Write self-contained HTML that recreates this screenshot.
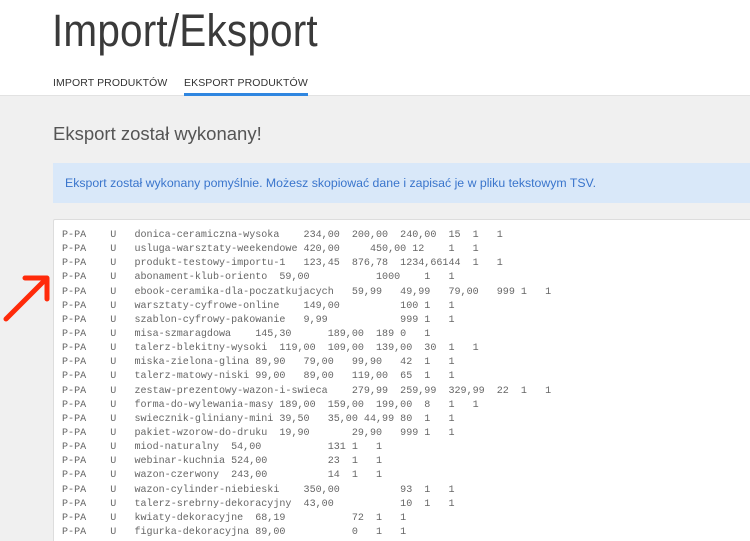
<!DOCTYPE html>
<html><head><meta charset="utf-8"><style>
*{margin:0;padding:0;box-sizing:border-box}
html,body{width:750px;height:541px;overflow:hidden}
body{background:#f0f0f0;font-family:"Liberation Sans",sans-serif;position:relative}
#hdr{position:absolute;left:0;top:0;width:750px;height:96px;background:#fff;border-bottom:1px solid #e2e2e2}
h1{position:absolute;left:52px;top:5px;font-weight:300;font-size:45px;color:#3a3a3a;transform:scaleX(0.9);transform-origin:0 0;letter-spacing:0.2px}
.tab{position:absolute;top:77px;font-size:10.5px;color:#333;letter-spacing:0.1px}
#ul{position:absolute;left:184px;top:93px;width:124px;height:3px;background:#2f86e0}
h2{position:absolute;left:53px;top:123px;font-weight:normal;font-size:18.5px;color:#555}
#alert{position:absolute;left:53px;top:163px;width:697px;height:40px;background:#d9e8f9;color:#3a75cc;font-size:12.3px;padding:13px 0 0 12px}
#ta{position:absolute;left:53px;top:219px;width:700px;height:340px;background:#fff;border:1px solid #ddd;border-radius:2px}
pre{position:absolute;left:62px;top:229px;font-family:"Liberation Mono",monospace;font-size:10.07px;line-height:14.14px;color:#666}
svg{position:absolute;left:0;top:0}
</style></head><body>
<div id="hdr">
<h1>Import/Eksport</h1>
<div class="tab" style="left:53px">IMPORT PRODUKTÓW</div>
<div class="tab" style="left:184px">EKSPORT PRODUKTÓW</div>
<div id="ul"></div>
</div>
<h2>Eksport został wykonany!</h2>
<div id="alert">Eksport został wykonany pomyślnie. Możesz skopiować dane i zapisać je w pliku tekstowym TSV.</div>
<div id="ta"></div>
<pre id="p"></pre>
<svg width="60" height="340" viewBox="0 0 60 340"><g stroke="#ff2a0a" stroke-width="5" stroke-linecap="round" stroke-linejoin="round" fill="none"><path d="M6 319 L46 279"/><path d="M25 278 L47 278 L47 299"/></g></svg>
<script>
var rows=[
[["donica-ceramiczna-wysoka",12],["234,00",40],["200,00",48],["240,00",56],["15",64],["1",68],["1",72]],
[["usluga-warsztaty-weekendowe",12],["420,00",40],["450,00",51],["12",58],["1",64],["1",68]],
[["produkt-testowy-importu-1",12],["123,45",40],["876,78",48],["1234,66",56],["144",63],["1",68],["1",72]],
[["abonament-klub-oriento",12],["59,00",36],["1000",52],["1",60],["1",64]],
[["ebook-ceramika-dla-poczatkujacych",12],["59,99",48],["49,99",56],["79,00",64],["999",72],["1",76],["1",80]],
[["warsztaty-cyfrowe-online",12],["149,00",40],["100",56],["1",60],["1",64]],
[["szablon-cyfrowy-pakowanie",12],["9,99",40],["999",56],["1",60],["1",64]],
[["misa-szmaragdowa",12],["145,30",32],["189,00",44],["189",52],["0",56],["1",60]],
[["talerz-blekitny-wysoki",12],["119,00",36],["109,00",44],["139,00",52],["30",60],["1",64],["1",68]],
[["miska-zielona-glina",12],["89,90",32],["79,00",40],["99,90",48],["42",56],["1",60],["1",64]],
[["talerz-matowy-niski",12],["99,00",32],["89,00",40],["119,00",48],["65",56],["1",60],["1",64]],
[["zestaw-prezentowy-wazon-i-swieca",12],["279,99",48],["259,99",56],["329,99",64],["22",72],["1",76],["1",80]],
[["forma-do-wylewania-masy",12],["189,00",36],["159,00",44],["199,00",52],["8",60],["1",64],["1",68]],
[["swiecznik-gliniany-mini",12],["39,50",36],["35,00",44],["44,99",50],["80",56],["1",60],["1",64]],
[["pakiet-wzorow-do-druku",12],["19,90",36],["29,90",48],["999",56],["1",60],["1",64]],
[["miod-naturalny",12],["54,00",28],["131",44],["1",48],["1",52]],
[["webinar-kuchnia",12],["524,00",28],["23",44],["1",48],["1",52]],
[["wazon-czerwony",12],["243,00",28],["14",44],["1",48],["1",52]],
[["wazon-cylinder-niebieski",12],["350,00",40],["93",56],["1",60],["1",64]],
[["talerz-srebrny-dekoracyjny",12],["43,00",40],["10",56],["1",60],["1",64]],
[["kwiaty-dekoracyjne",12],["68,19",32],["72",48],["1",52],["1",56]],
[["figurka-dekoracyjna",12],["89,00",32],["0",48],["1",52],["1",56]]
];
var out=[];
rows.forEach(function(r){var s="P-PA    U   ";r.forEach(function(c){while(s.length<c[1])s+=" ";if(s.length>c[1])s+=" ";s+=c[0];});out.push(s);});
document.getElementById("p").textContent=out.join("\n");
</script>
</body></html>
